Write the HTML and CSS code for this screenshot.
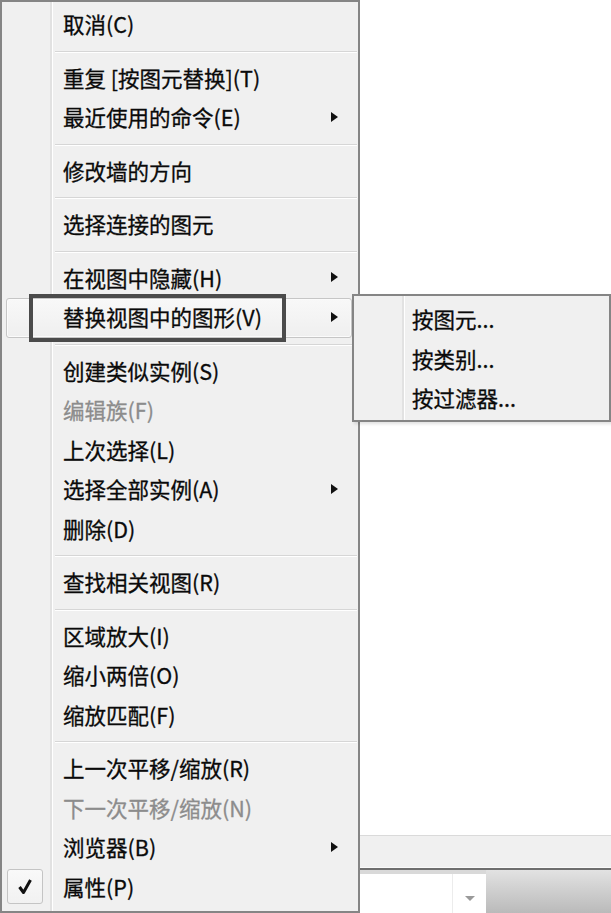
FILE: index.html
```html
<!DOCTYPE html>
<html lang="zh-CN">
<head>
  <meta charset="UTF-8">
  <title>右键菜单</title>
  <link rel="stylesheet" href="styles.css">
</head>
<body>

<div id="app">
  <div class="canvas"></div>
  <div class="band"></div>
  <div class="toolbar">
    <div class="combo">
      <span class="combo-text"></span>
      <span class="combo-btn"><span class="down"></span></span>
    </div>
    <div class="toolbar-rest"></div>
  </div>
</div>

<ul id="context-menu" class="menu">
  <li class="item">取消(C)</li>
  <li class="sep"></li>
  <li class="item">重复 [按图元替换](T)</li>
  <li class="item">最近使用的命令(E)<span class="arrow"></span></li>
  <li class="sep"></li>
  <li class="item">修改墙的方向</li>
  <li class="sep"></li>
  <li class="item">选择连接的图元</li>
  <li class="sep"></li>
  <li class="item">在视图中隐藏(H)<span class="arrow"></span></li>
  <li class="item hover">替换视图中的图形(V)<span class="arrow"></span></li>
  <li class="sep"></li>
  <li class="item">创建类似实例(S)</li>
  <li class="item disabled">编辑族(F)</li>
  <li class="item">上次选择(L)</li>
  <li class="item">选择全部实例(A)<span class="arrow"></span></li>
  <li class="item">删除(D)</li>
  <li class="sep"></li>
  <li class="item">查找相关视图(R)</li>
  <li class="sep"></li>
  <li class="item">区域放大(I)</li>
  <li class="item">缩小两倍(O)</li>
  <li class="item">缩放匹配(F)</li>
  <li class="sep"></li>
  <li class="item">上一次平移/缩放(R)</li>
  <li class="item disabled">下一次平移/缩放(N)</li>
  <li class="item">浏览器(B)<span class="arrow"></span></li>
  <li class="item checked">
    <span class="check">
      <svg width="16" height="18" viewBox="0 0 16 18"><path d="M2.5 10 L6.5 15.5 L13.5 3" fill="none" stroke="#111" stroke-width="3" stroke-linejoin="round"/></svg>
    </span>属性(P)
  </li>
</ul>

<ul id="sub-menu" class="menu submenu">
  <li class="item">按图元...</li>
  <li class="item">按类别...</li>
  <li class="item">按过滤器...</li>
</ul>

</body>
</html>
```

FILE: styles.css
```css
html, body { margin: 0; padding: 0; }
body { width: 611px; height: 913px; overflow: hidden; background: #fff; font-family: "Noto Sans CJK SC", "Noto Sans", sans-serif; position: relative; }

#app { display: flex; flex-direction: column; height: 913px; }
.canvas { flex: 1; background: #fff; }
.band { height: 31px; background: #f0f0f0; border-top: 1px solid #dadada; border-bottom: 1px solid #fafafa; }
.toolbar { display: flex; height: 43px; border-top: 2px solid #6e6e6e; }
.combo { width: 486px; display: flex; background: #fff; border-top: 4px solid #d9d9d9; }
.combo-text { flex: 1; }
.combo-btn { width: 33px; display: flex; justify-content: center; align-items: center; padding-top: 10px; border-left: 1px solid #ececec; }
.down { width: 0; height: 0; border-top: 5px solid #9a9a9a; border-left: 5px solid transparent; border-right: 5px solid transparent; }
.toolbar-rest { flex: 1; background: linear-gradient(#e2e2e2, #bababa); }

.menu { list-style: none; margin: 0; position: absolute; box-sizing: border-box; border: 2px solid #858585; color: #0a0a0a; font-size: 21.5px; -webkit-text-stroke: 0.3px currentColor;
  background: linear-gradient(to right, transparent 48px, #e2e2e2 48px, #e2e2e2 50px, #fff 50px, #fff 51px, transparent 51px), #f0f0f0; }
#context-menu { left: 0; top: 0; width: 360px; height: 913px; padding: 3px 0 4px 0; }
.submenu { left: 352px; top: 294px; width: 259px; padding: 4px 0 1.5px 0; box-shadow: 2px 2px 3px rgba(0,0,0,0.12); }

.item { position: relative; display: flex; align-items: center; box-sizing: border-box; height: 39.5px; margin: 0 6px 0 4px; padding: 0 0 2px 56px; border: 1px solid transparent; border-radius: 3px; line-height: 1; white-space: nowrap; }
.submenu .item { padding-left: 53px; margin: 0 4px; }
.item.disabled { color: #8c8c8c; }
.item.hover { border-color: #c6c6c6; background: linear-gradient(#f8f8f8, #efefef); box-shadow: inset 0 0 0 1px #fbfbfb; }
.item.hover::after { content: ""; position: absolute; left: 22px; top: -5px; width: 257px; height: 48px; box-sizing: border-box; border: 4px solid #4b4b4b; }

.arrow { margin-left: auto; margin-right: 13px; width: 0; height: 0; border-left: 7px solid #111; border-top: 5.5px solid transparent; border-bottom: 5.5px solid transparent; }

.item.checked { padding-left: 0; }
.check { width: 36px; height: 35px; margin-right: 20px; box-sizing: border-box; display: flex; justify-content: center; align-items: center; border: 1px solid #c4c4c4; border-radius: 3px; background: linear-gradient(#f9f9f9, #f1f1f1); }

.sep { height: 1px; margin: 6px 1px 6px 53px; background: #d6d6d6; border-bottom: 1px solid #fff; }
```
